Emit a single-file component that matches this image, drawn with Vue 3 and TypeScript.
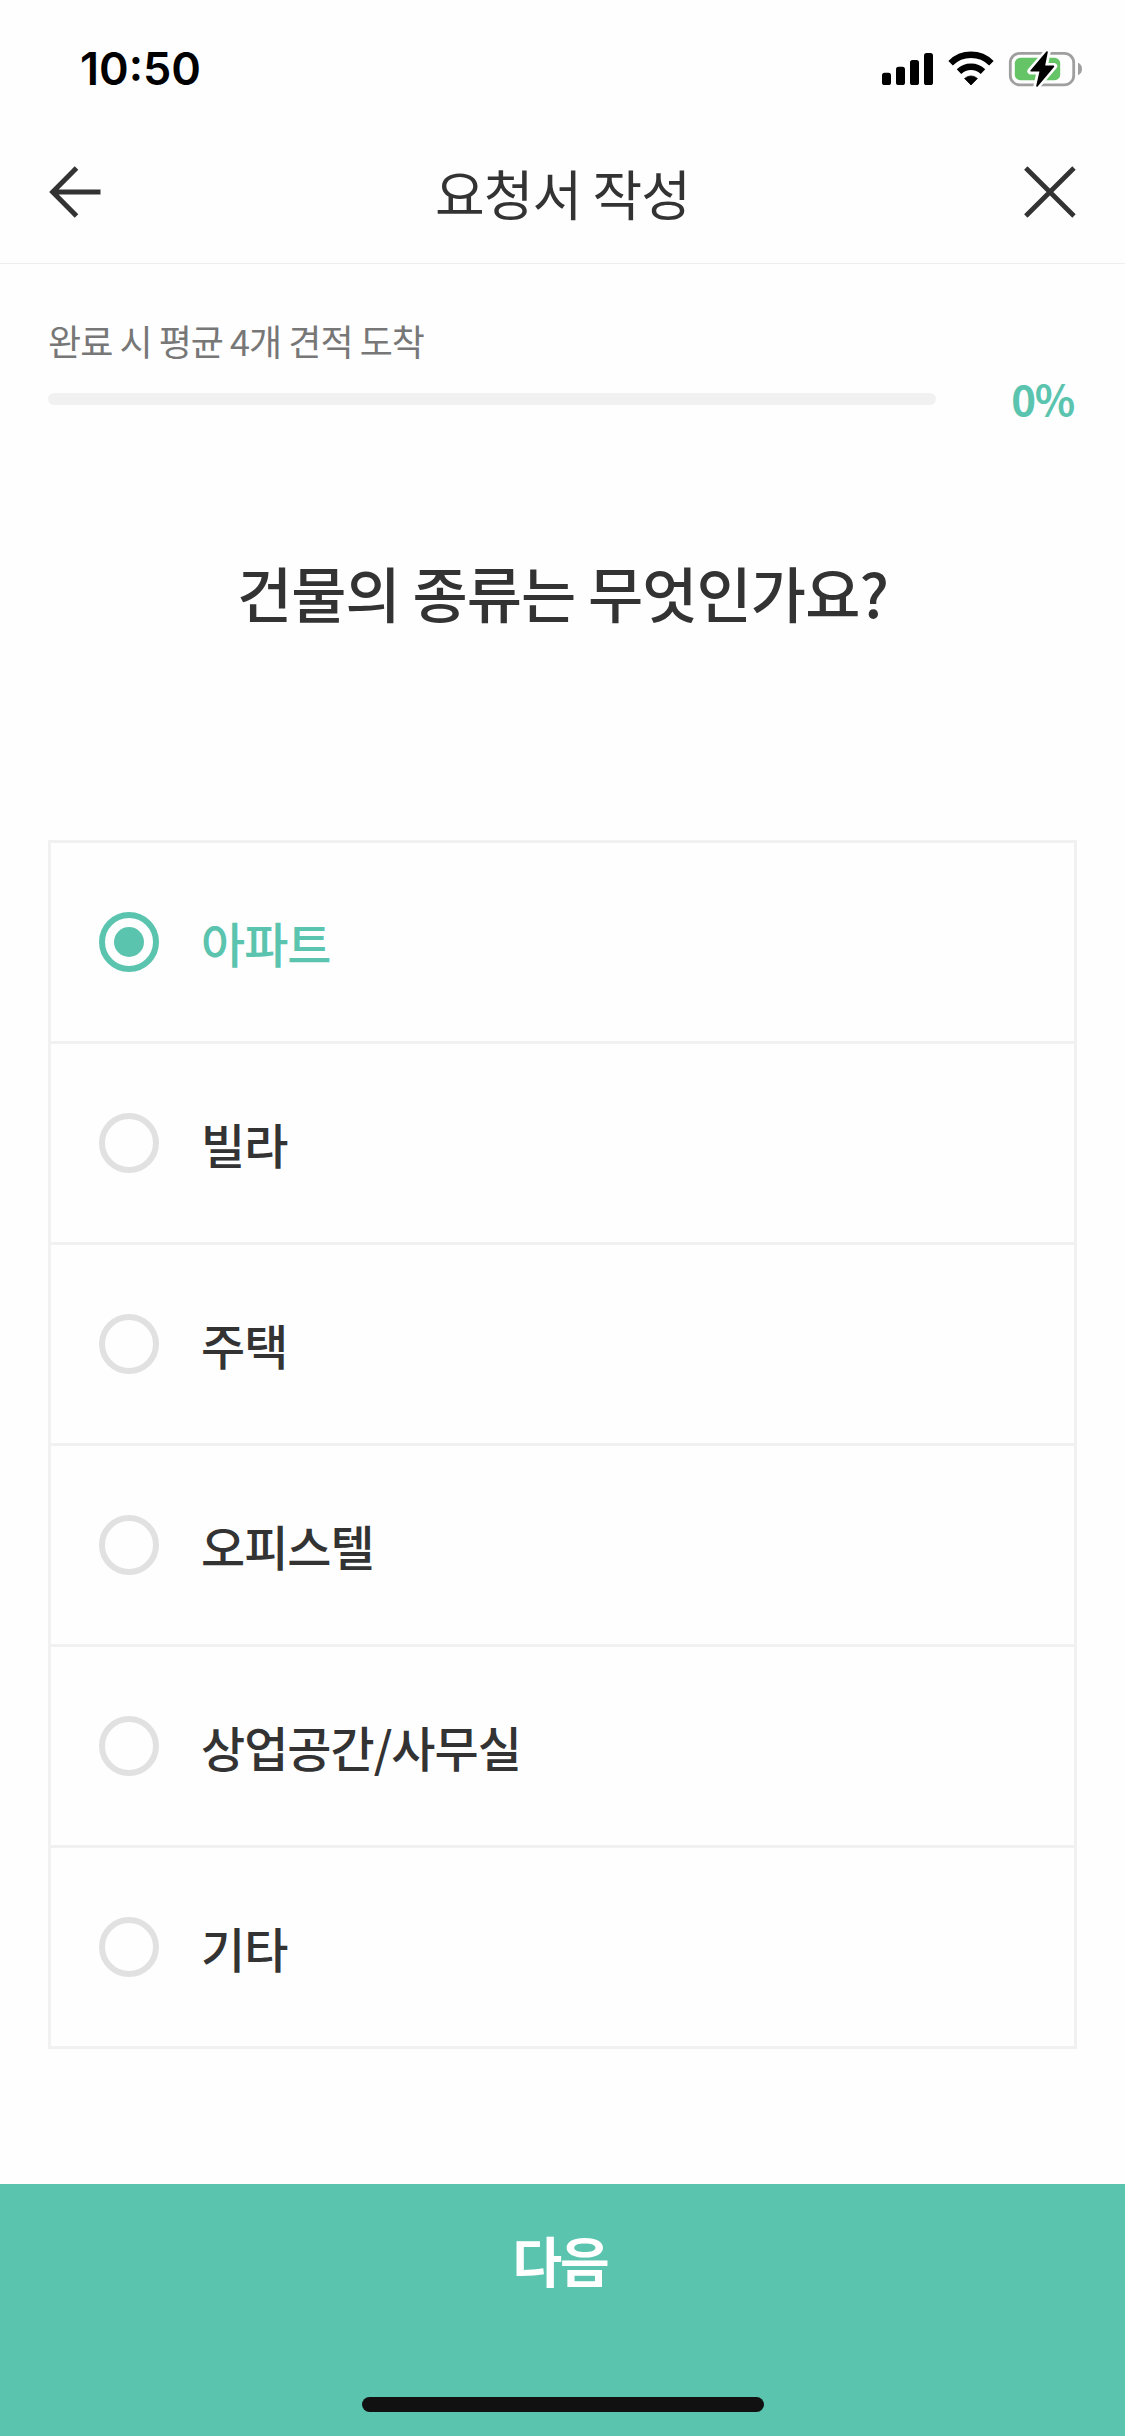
<script setup lang="ts">
import { ref } from 'vue'

const progress = ref<number>(0)
const options: string[] = ['아파트', '빌라', '주택', '오피스텔', '상업공간/사무실', '기타']
const selected = ref<string>('아파트')
</script>

<template>
  <div class="screen">
    <div class="status">
      <span class="clock">10:50</span>
      <svg class="indicators" width="206" height="40" viewBox="0 0 206 40">
        <!-- cellular signal -->
        <rect x="2" y="23.7" width="9" height="12.3" rx="2.6" />
        <rect x="16" y="17.7" width="9" height="18.3" rx="2.6" />
        <rect x="30" y="11" width="9" height="25" rx="2.6" />
        <rect x="44" y="4" width="9" height="32" rx="2.6" />
        <!-- wifi -->
        <g fill="none" stroke="#000" stroke-width="6.4">
          <path d="M70.6 14.2A29 29 0 0 1 111.4 14.2" />
          <path d="M79 22.6A17.2 17.2 0 0 1 103 22.6" />
        </g>
        <path d="M91 36L84.6 29.5A9.3 9.3 0 0 1 97.4 29.5Z" stroke="#000" stroke-width=".8" stroke-linejoin="round" />
        <!-- charging battery -->
        <rect x="130.3" y="4.3" width="63.4" height="31.6" rx="9.5" fill="none" stroke="#9f9f9f" stroke-width="2.8" />
        <rect x="134.8" y="8.8" width="45.4" height="22.4" rx="5.5" fill="#65c466" />
        <path d="M198 13.8C200.8 15 202 17.3 202 20C202 22.7 200.8 25 198 26.2Z" fill="#9f9f9f" />
        <path d="M167.5 2.5L150.6 22.2H160L156.6 37.5L174 17.2H164.6Z" fill="#fefefe" stroke="#fefefe" stroke-width="6.5" stroke-linejoin="round" />
        <path d="M167 3L151.2 21.8H160.4L157 37L173.4 17.4H164.2Z" stroke="#000" stroke-width="1.6" stroke-linejoin="round" />
      </svg>
    </div>

    <header class="header">
      <button class="icon" aria-label="뒤로">
        <svg width="54" height="54" viewBox="0 0 54 54">
          <path d="M28.5 3L4.700 27L28.5 51M5 27H52.5" fill="none" stroke="#333" stroke-width="5" />
        </svg>
      </button>
      <h1 class="title">요청서 작성</h1>
      <button class="icon" aria-label="닫기">
        <svg width="54" height="54" viewBox="0 0 54 54">
          <path d="M2.8 3L51 51M51 3L2.8 51" fill="none" stroke="#333" stroke-width="4.8" />
        </svg>
      </button>
    </header>

    <section class="progress">
      <p class="hint">완료 시 평균 4개 견적 도착</p>
      <div class="progress-row">
        <div class="track"><div class="bar" :style="{ width: progress + '%' }"></div></div>
        <span class="percent">{{ progress }}%</span>
      </div>
    </section>

    <h2 class="question">건물의 종류는 무엇인가요?</h2>

    <ul class="options">
      <li
        v-for="option in options"
        :key="option"
        class="option"
        :class="{ active: option === selected }"
        @click="selected = option"
      >
        <span class="radio"><span v-if="option === selected" class="dot"></span></span>
        <span class="label">{{ option }}</span>
      </li>
    </ul>

    <footer class="footer">
      <button class="next">다음</button>
      <div class="home"></div>
    </footer>
  </div>
</template>

<style>
body {
  margin: 0;
  background: #fefefe;
}
</style>

<style scoped>
.screen {
  display: flex;
  flex-direction: column;
  width: 1125px;
  height: 2436px;
  overflow: hidden;
  background: #fefefe;
  color: #333;
  font-family: 'Noto Sans CJK KR', sans-serif;
  letter-spacing: -0.9px;
}
button {
  padding: 0;
  border: 0;
  background: none;
  font: inherit;
  letter-spacing: inherit;
  color: inherit;
}
.status {
  display: flex;
  justify-content: space-between;
  align-items: center;
  box-sizing: border-box;
  height: 132px;
  padding: 6px 39px 0 80px;
}
.clock {
  font: 600 45px/54px Inter, sans-serif;
  letter-spacing: 0;
  color: #000;
}
.indicators {
  display: block;
}
.header {
  display: flex;
  justify-content: space-between;
  align-items: center;
  box-sizing: border-box;
  height: 132px;
  padding: 0 48px 11px;
  border-bottom: 1px solid #eee;
}
.icon {
  display: block;
  width: 54px;
  height: 54px;
}
.icon svg {
  display: block;
}
.title {
  margin: 0;
  padding-top: 2px;
  font-size: 54px;
  line-height: 80px;
  font-weight: 400;
}
.progress {
  padding: 51px 48px 0;
}
.hint {
  margin: 0;
  font-size: 36px;
  line-height: 50px;
  letter-spacing: -0.97px;
  color: #777;
}
.progress-row {
  display: flex;
  justify-content: space-between;
  align-items: center;
  height: 68px;
}
.track {
  width: 888px;
  height: 12px;
  border-radius: 6px;
  background: #f1f1f1;
  overflow: hidden;
}
.bar {
  height: 100%;
  background: #5bc4af;
}
.percent {
  padding: 0 3px 2px 0;
  font-size: 42px;
  line-height: 60px;
  font-weight: 700;
  letter-spacing: -1.2px;
  color: #5bc4af;
}
.question {
  margin: 119px 0 0;
  font-size: 60px;
  line-height: 80px;
  font-weight: 500;
  text-align: center;
}
.options {
  margin: 208px 48px 0;
  padding: 0;
  list-style: none;
  border: 3px solid #f1f1f1;
}
.option {
  display: flex;
  align-items: center;
  gap: 42px;
  height: 198px;
  padding-left: 48px;
}
.option + .option {
  border-top: 3px solid #f1f1f1;
}
.radio {
  display: flex;
  align-items: center;
  justify-content: center;
  box-sizing: border-box;
  width: 60px;
  height: 60px;
  border: 6px solid #e1e1e1;
  border-radius: 50%;
}
.dot {
  width: 30px;
  height: 30px;
  border-radius: 50%;
  background: #5bc4af;
}
.label {
  font-size: 48px;
  line-height: 72px;
  font-weight: 500;
  letter-spacing: -1px;
}
.active .label {
  color: #5bc4af;
}
.active .radio {
  border-color: #5bc4af;
}
.footer {
  display: flex;
  flex-direction: column;
  align-items: center;
  justify-content: space-between;
  box-sizing: border-box;
  height: 252px;
  margin-top: auto;
  padding-bottom: 24px;
  background: #5bc4af;
}
.next {
  width: 100%;
  height: 150px;
  padding-right: 5px;
  color: #fff;
  font-size: 54px;
  font-weight: 700;
  letter-spacing: -2.2px;
  text-align: center;
}
.home {
  width: 402px;
  height: 15px;
  border-radius: 8px;
  background: #111;
}
</style>
